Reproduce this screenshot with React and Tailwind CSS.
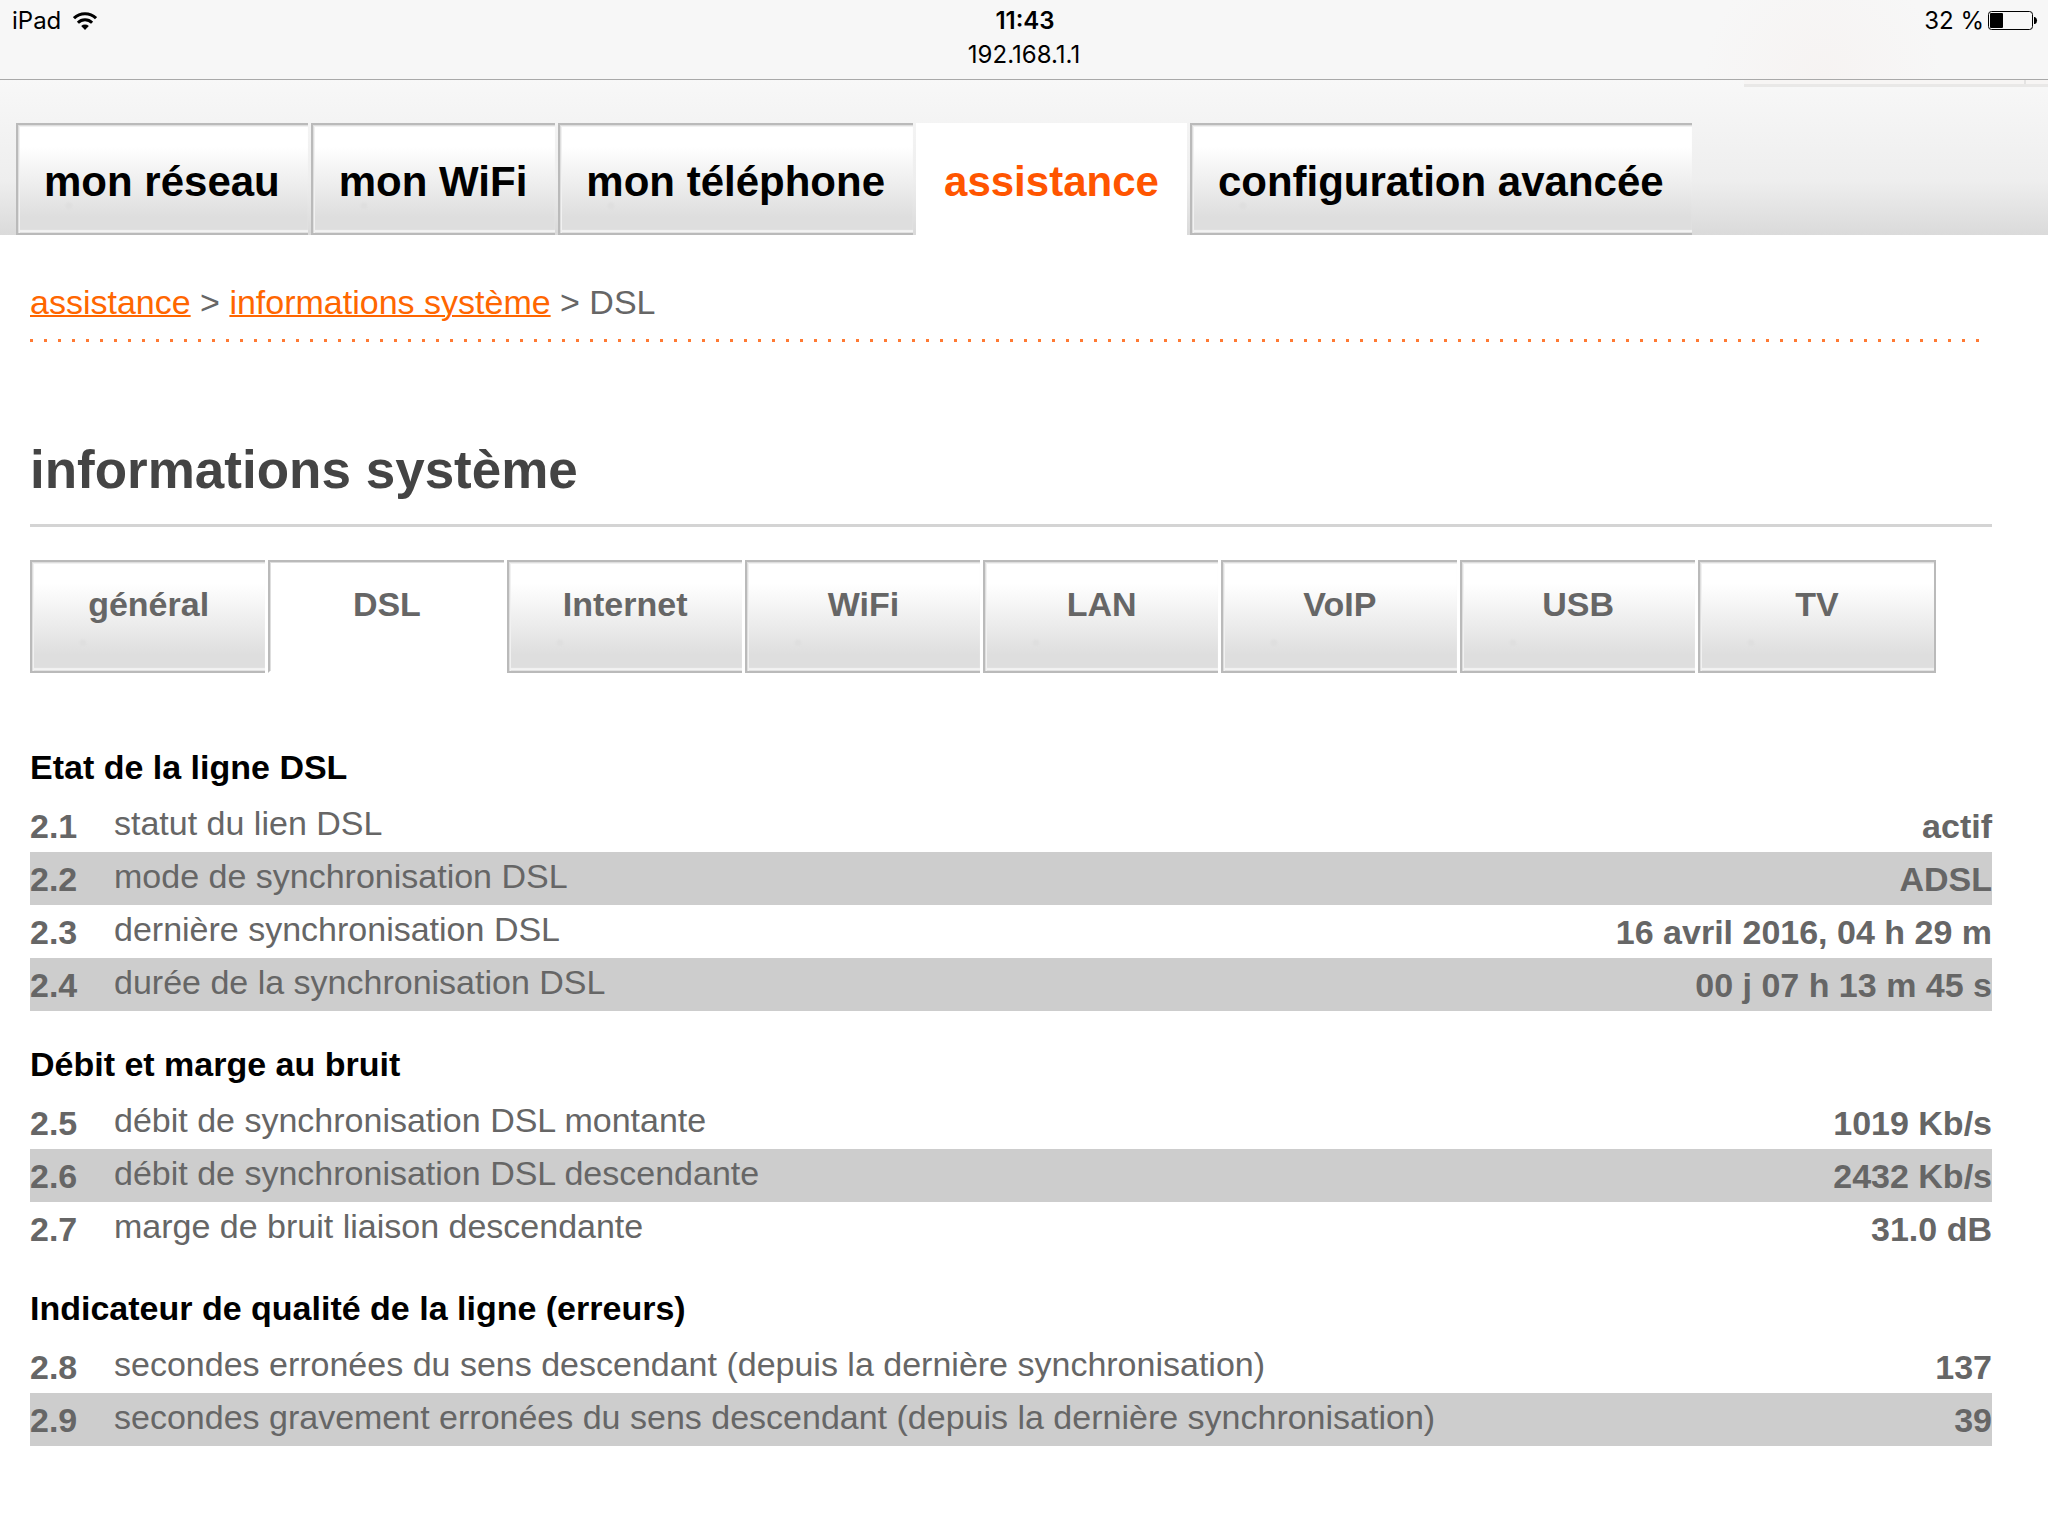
const mainTabs = ['mon réseau', 'mon WiFi', 'mon téléphone', 'assistance', 'configuration avancée']

const subTabs = ['général', 'DSL', 'Internet', 'WiFi', 'LAN', 'VoIP', 'USB', 'TV']

const sections = [
    {
        title: 'Etat de la ligne DSL',
        rows: [
            { id: '2.1', label: 'statut du lien DSL', value: 'actif' },
            { id: '2.2', label: 'mode de synchronisation DSL', value: 'ADSL' },
            { id: '2.3', label: 'dernière synchronisation DSL', value: '16 avril 2016, 04 h 29 m' },
            { id: '2.4', label: 'durée de la synchronisation DSL', value: '00 j 07 h 13 m 45 s' },
        ],
    },
    {
        title: 'Débit et marge au bruit',
        rows: [
            { id: '2.5', label: 'débit de synchronisation DSL montante', value: '1019 Kb/s' },
            { id: '2.6', label: 'débit de synchronisation DSL descendante', value: '2432 Kb/s' },
            { id: '2.7', label: 'marge de bruit liaison descendante', value: '31.0 dB' },
        ],
    },
    {
        title: 'Indicateur de qualité de la ligne (erreurs)',
        rows: [
            { id: '2.8', label: 'secondes erronées du sens descendant (depuis la dernière synchronisation)', value: '137' },
            { id: '2.9', label: 'secondes gravement erronées du sens descendant (depuis la dernière synchronisation)', value: '39' },
        ],
    },
]

// Grey bevelled look shared by the inactive tabs of both menus
const raisedTab = 'border-[#bababa] bg-[radial-gradient(circle_at_51px_81px,#dfdfdf_0_2px,transparent_5px),linear-gradient(to_bottom,#fff_20%,#dedede_85%)] shadow-[inset_1px_1px_0_#dedede,inset_2px_2px_0_#f1f1f1,inset_0_-1px_0_#e2e2e2,inset_0_-3px_1px_#f3f3f3]'

const WifiIcon = () => (
    <svg viewBox="0 0 24 20" className="h-5 w-6" fill="none" stroke="#000" strokeWidth="3">
        <path d="M1 7.2 A15.6 15.6 0 0 1 23 7.2" />
        <path d="M4.9 11.8 A10 10 0 0 1 19.1 11.8" />
        <path d="M12 19 L8.2 15 A5.6 5.6 0 0 1 15.8 15 Z" fill="#000" stroke="none" />
    </svg>
)

const BatteryIcon = () => (
    <svg viewBox="0 0 50 20" className="h-5 w-[50px]" fill="none">
        <rect x="0.5" y="0.5" width="44" height="18" rx="3" stroke="#000" />
        <rect x="2" y="2" width="13" height="15" rx="1" fill="#000" />
        <path d="M46 6 H47 A4 4 0 0 1 47 13 H46 Z" fill="#000" />
    </svg>
)

const StatusBar = () => (
    <header className="border-b border-[#a9a9a9] bg-[#f7f7f7] bg-[radial-gradient(circle_at_89%_100%,#f6f3f2_0,#f7f7f7_120px)] font-['Inter',sans-serif] text-2xl leading-[34px] text-black">
        <div className="grid grid-cols-3 items-center pt-1 pr-2.5 pl-3">
            <div className="flex items-center gap-3">
                <span>iPad</span>
                <WifiIcon />
            </div>
            <span className="text-center font-semibold">11:43</span>
            <div className="flex items-center justify-end gap-1">
                <span>32 %</span>
                <BatteryIcon />
            </div>
        </div>
        <p className="pb-[7px] text-center">192.168.1.1</p>
    </header>
)

const MainNav = () => (
    <nav className="bg-linear-to-b from-[#f8f8f8] via-[#eeeeee] via-65% to-[#dadada]">
        {/* Lower edge of the header box that scrolls under the status bar */}
        <div className="flex h-[43px] justify-end">
            <div className="flex h-[7px] w-[304px] border-b-[3px] border-[#e9e8e7] bg-[#f7f5f4]">
                <span className="ml-auto w-6 border-l-2 border-[#e4e3e2]" />
            </div>
        </div>
        <ul className="flex gap-[3px] pl-4">
            {mainTabs.map((tab) => (
                <li key={tab}>
                    <button
                        type="button"
                        className={`h-28 pt-1 pr-7 text-[42px] font-bold ${tab === 'assistance'
                            ? 'bg-white pl-7 text-[#ff5500]'
                            : `border-y-2 border-l-2 pl-[26px] text-black ${raisedTab}`
                            }`}
                    >
                        {tab}
                    </button>
                </li>
            ))}
        </ul>
    </nav>
)

const Breadcrumb = () => (
    <nav className="pt-12 leading-[38px] text-[#666666]">
        <a href="#assistance" className="text-[#ff6600] underline decoration-2">assistance</a>
        {' > '}
        <a href="#systeme" className="text-[#ff6600] underline decoration-2">informations système</a>
        {' > DSL'}
    </nav>
)

const SubNav = () => (
    <ul className="mt-[33px] grid grid-cols-8 pr-14">
        {subTabs.map((tab) => (
            <li key={tab} className="border-r-[3px] border-white last:border-r-2 last:border-[#bababa]">
                <button
                    type="button"
                    className={`h-[113px] w-full border-y-2 border-l-2 pb-6 text-[34px] font-bold text-[#666666] ${tab === 'DSL'
                        ? 'border-[#bababa] border-b-white bg-white shadow-[inset_1px_1px_0_#dedede]'
                        : raisedTab
                        }`}
                >
                    {tab}
                </button>
            </li>
        ))}
    </ul>
)

const InfoSection = ({ title, rows }) => (
    <section>
        <h2 className="pt-8 pb-[11px] leading-[42px] font-bold text-black">{title}</h2>
        <table className="w-full text-[#666666]">
            <tbody>
                {rows.map((row) => (
                    <tr key={row.id} className="h-[53px] align-top even:bg-[#cdcdcd]">
                        <th scope="row" className="w-21 pt-px text-left leading-[52px] font-bold">{row.id}</th>
                        <td className="leading-[49px]">{row.label}</td>
                        <td className="pt-px text-right leading-[52px] font-bold">{row.value}</td>
                    </tr>
                ))}
            </tbody>
        </table>
    </section>
)

const App = () => {
    return (
        <div className="min-h-screen bg-white font-['Liberation_Sans',Arial,sans-serif]">
            <StatusBar />
            <MainNav />
            <main className="pr-14 pl-[30px] text-[34px]">
                <Breadcrumb />
                {/* Dotted rule */}
                <div className="mt-[18px] mr-2 h-[3px] bg-[repeating-linear-gradient(90deg,#ff7a33_0_3px,transparent_3px_14px)]" />
                <h1 className="mt-[98px] border-b-[3px] border-[#d4d4d4] pb-6 text-[53px] leading-[60px] font-bold text-[#444444]">
                    informations système
                </h1>
                <SubNav />
                <div className="mt-[41px]">
                    {sections.map((section) => (
                        <InfoSection key={section.title} title={section.title} rows={section.rows} />
                    ))}
                </div>
            </main>
        </div>
    )
}

export default App
